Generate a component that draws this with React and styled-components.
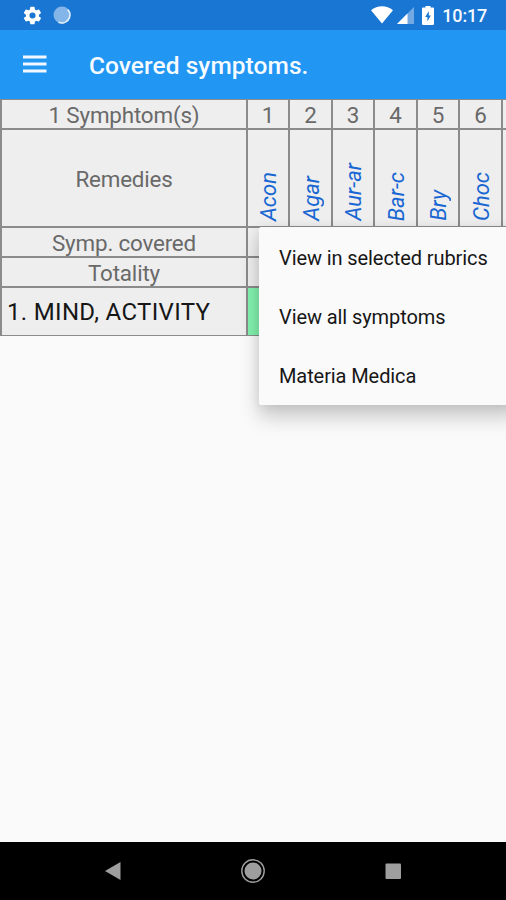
import styled, { createGlobalStyle } from 'styled-components';

const GlobalStyle = createGlobalStyle`
  body {
    margin: 0;
    background: #fafafa;
    font-family: Roboto, sans-serif;
  }
`;

const Screen = styled.div`
  display: flex;
  flex-direction: column;
  width: 506px;
  height: 900px;
  overflow: hidden;
  background: #fafafa;
`;

// Android status bar

const StatusBar = styled.div`
  display: flex;
  flex: none;
  align-items: center;
  justify-content: space-between;
  box-sizing: border-box;
  height: 30px;
  padding: 0 19px 0 22px;
  background: #1976d2;
`;

const StatusGroup = styled.div`
  display: flex;
  align-items: center;
  gap: ${props => props.gap};
`;

const Clock = styled.span`
  margin-left: 4px;
  padding-top: 1px;
  color: #f4f9ff;
  font-size: 18px;
  font-weight: 500;
  line-height: 29px;
  letter-spacing: -0.2px;
`;

const AppBar = styled.header`
  display: flex;
  flex: none;
  align-items: center;
  box-sizing: border-box;
  height: 69px;
  padding: 1px 0 0 23px;
  background: #2196f3;
`;

const MenuButton = styled.button`
  display: flex;
  width: 24px;
  margin: 0 42px 2px 0;
  padding: 0;
  border: 0;
  background: none;
`;

const Title = styled.h1`
  margin: 0;
  padding-top: 1px;
  color: #f6fbff;
  font-size: 24.5px;
  font-weight: 500;
  line-height: 30px;
  letter-spacing: 0.05px;
`;

// The table draws its lines with its own background

const Content = styled.main`
  position: relative;
  flex: 1;
  min-height: 0;
`;

const Table = styled.div`
  display: grid;
  grid-template-columns: 244px repeat(6, 40.7px) 41px;
  grid-template-rows: 28px 96px 28px 28px 47px;
  gap: 2px 1.8px;
  box-sizing: border-box;
  width: 506px;
  padding: 1px 0 1px 2px;
  overflow: hidden;
  background: #8b8b8b;
`;

const Cell = styled.div`
  display: flex;
  align-items: center;
  justify-content: center;
  min-width: 0;
  background: ${props => props.bg || '#eeeeee'};
  color: #696969;
  font-size: 22.4px;
  letter-spacing: ${props => props.spacing || '0'};
  white-space: nowrap;
`;

const HeadCell = styled(Cell)`
  box-sizing: border-box;
  padding-top: 2px;
`;

const Rubric = styled(Cell)`
  justify-content: flex-start;
  padding-left: 5px;
  color: #161616;
  font-size: 24px;
`;

const RemedyCell = styled(Cell)`
  align-items: flex-end;
  padding: 0 0 5px 2px;
`;

const Remedy = styled.span`
  color: #1967d2;
  font-size: 22px;
  font-style: italic;
  line-height: 26px;
  writing-mode: vertical-rl;
  transform: rotate(180deg);
`;

const Popup = styled.ul`
  position: absolute;
  top: 128px;
  left: 259px;
  width: 260px;
  margin: 0;
  padding: 0;
  border-radius: 2px;
  background: #fafafa;
  box-shadow: 0 12px 20px rgba(0, 0, 0, 0.2), 0 1px 12px rgba(0, 0, 0, 0.08);
  list-style: none;
`;

const PopupItem = styled.li`
  display: flex;
  align-items: center;
  height: 59.2px;
  padding: 2px 0 0 20px;
  box-sizing: border-box;
  color: #161616;
  font-size: 20px;
  letter-spacing: -0.09px;
  white-space: nowrap;
`;

const NavBar = styled.nav`
  display: flex;
  flex: none;
  align-items: center;
  justify-content: space-between;
  box-sizing: border-box;
  height: 58px;
  padding: 0 104px 0 105px;
  background: #000;
`;

const remedies = ['Acon', 'Agar', 'Aur-ar', 'Bar-c', 'Bry', 'Choc', ''];
const actions = ['View in selected rubrics', 'View all symptoms', 'Materia Medica'];

const GearIcon = () => (
  <svg width="21" height="21" viewBox="0 0 24 24" fill="#fff">
    <path d="M19.4 13a7.8 7.8 0 0 0 0-2l2.1-1.6a.5.5 0 0 0 .1-.7l-2-3.4a.5.5 0 0 0-.6-.2l-2.5 1a7.3 7.3 0 0 0-1.7-1l-.4-2.6a.5.5 0 0 0-.5-.5h-4a.5.5 0 0 0-.5.5L9 5.1a7.7 7.7 0 0 0-1.7 1l-2.5-1a.5.5 0 0 0-.6.2l-2 3.4a.5.5 0 0 0 .1.7L4.5 11a7.9 7.9 0 0 0 0 2l-2.2 1.6a.5.5 0 0 0-.1.7l2 3.4c.1.2.4.3.6.2l2.5-1c.5.4 1.1.7 1.7 1l.4 2.6c0 .3.2.5.5.5h4c.3 0 .5-.2.5-.5l.4-2.6a7.3 7.3 0 0 0 1.7-1l2.5 1c.2.1.5 0 .6-.2l2-3.4a.5.5 0 0 0-.1-.7zM12 15.500a3.500 3.500 0 1 1 0-7 3.500 3.500 0 0 1 0 7z" />
  </svg>
);

const SyncIcon = () => (
  <svg width="18" height="18" viewBox="0 0 18 18">
    <circle cx="9" cy="9" r="8.5" fill="#84b5e8" />
    <path d="M14.8 3.6A8 8 0 0 1 5.5 16.2" fill="none" stroke="#e3f0fc" strokeWidth="1.7" />
  </svg>
);

const WifiIcon = () => (
  <svg width="22" height="18" viewBox="0 0 22 18" fill="#fff">
    <path d="M0 4.2C6.500-1 15.500-1 22 4.2L11 17.500z" />
  </svg>
);

const SignalIcon = () => (
  <svg width="17" height="17" viewBox="0 0 17 17">
    <path d="M0 17L17 0v17z" fill="#72a9e2" />
    <path d="M0 17L10.500 6.500V17z" fill="#fff" />
  </svg>
);

const BatteryIcon = () => (
  <svg width="12" height="19" viewBox="0 0 12 19">
    <path d="M3.500 1.500V0h5v1.500H11q1 0 1 1V18q0 1-1 1H1q-1 0-1-1V2.500q0-1 1-1z" fill="#fff" />
    <path d="M6.800 5L3.200 11h2.200v4.500L8.800 9.500H6.800z" fill="#1976d2" />
  </svg>
);

const BurgerIcon = () => (
  <svg width="24" height="18" viewBox="0 0 24 18" fill="#f1f8ff">
    <path d="M0 .5h23.500v3H0zM0 7.500h23.500v3H0zM0 14.500h23.500v3H0z" />
  </svg>
);

const App = () => (
  <Screen>
    <GlobalStyle />
    <StatusBar>
      <StatusGroup gap="10px">
        <GearIcon />
        <SyncIcon />
      </StatusGroup>
      <StatusGroup gap="4px">
        <WifiIcon />
        <SignalIcon />
        <span />
        <BatteryIcon />
        <Clock>10:17</Clock>
      </StatusGroup>
    </StatusBar>

    <AppBar>
      <MenuButton aria-label="Menu">
        <BurgerIcon />
      </MenuButton>
      <Title>Covered symptoms.</Title>
    </AppBar>

    <Content>
      <Table>
        <HeadCell spacing="-0.17px">1 Symphtom(s)</HeadCell>
        {remedies.map((name, i) => (
          <HeadCell key={i}>{name && i + 1}</HeadCell>
        ))}
        <HeadCell spacing="-0.2px">Remedies</HeadCell>
        {remedies.map((name, i) => (
          <RemedyCell key={i}>
            <Remedy>{name}</Remedy>
          </RemedyCell>
        ))}
        <HeadCell spacing="-0.18px">Symp. covered</HeadCell>
        {remedies.map((name, i) => (
          <Cell key={i} />
        ))}
        <HeadCell spacing="-0.15px">Totality</HeadCell>
        {remedies.map((name, i) => (
          <Cell key={i} />
        ))}
        <Rubric spacing="0.33px">1. MIND, ACTIVITY</Rubric>
        {remedies.map((name, i) => (
          <Cell key={i} bg="#82f2ae" />
        ))}
      </Table>
      <Popup>
        {actions.map(action => (
          <PopupItem key={action}>{action}</PopupItem>
        ))}
      </Popup>
    </Content>

    <NavBar>
      <svg width="16" height="18" viewBox="0 0 16 18" fill="#9e9e9e">
        <path d="M0 9L15.500 0v18z" />
      </svg>
      <svg width="24" height="24" viewBox="0 0 24 24">
        <circle cx="12" cy="12" r="11.2" fill="none" stroke="#9e9e9e" strokeWidth="1.4" />
        <circle cx="12" cy="12" r="8.5" fill="#9e9e9e" />
      </svg>
      <svg width="17" height="17" viewBox="0 0 17 17">
        <rect x="0.5" y="0.5" width="15.5" height="15.5" rx="1" fill="#9e9e9e" />
      </svg>
    </NavBar>
  </Screen>
);

export default App;
